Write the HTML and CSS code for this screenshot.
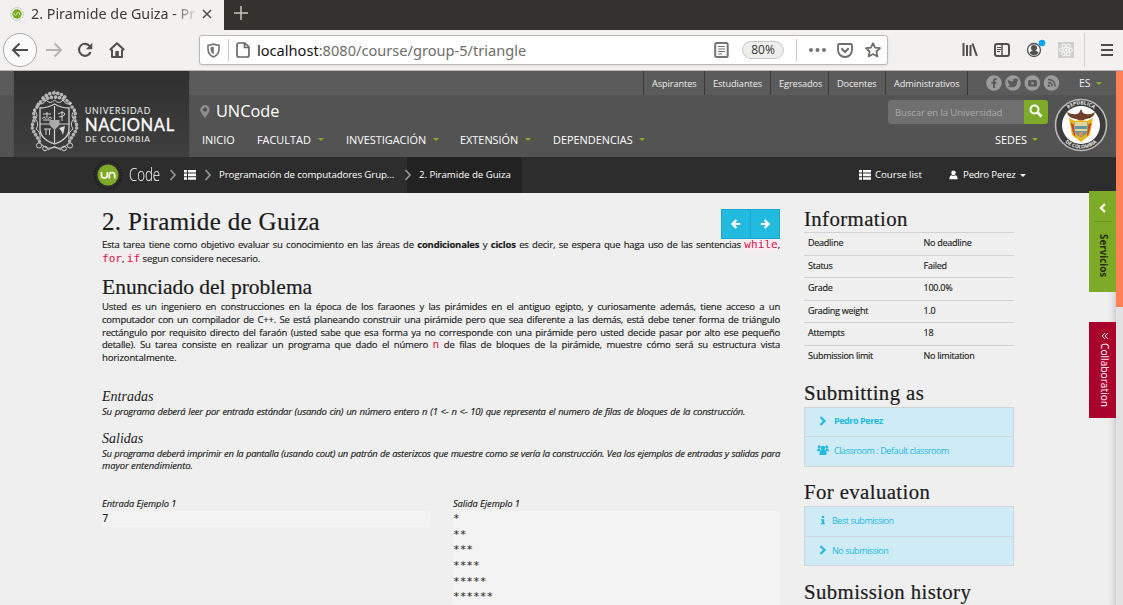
FILE: index.html
```html
<!DOCTYPE html>
<html lang="es">
<head>
<meta charset="utf-8">
<title>2. Piramide de Guiza - Programación</title>
<link rel="stylesheet" href="styles.css">
</head>
<body>
<svg width="0" height="0" class="defs">
  <symbol id="list" viewBox="0 0 12 10"><path d="M0 0h3v2.6H0zM4 0h8v2.6H4zM0 3.6h3v2.6H0zM4 3.6h8v2.6H4zM0 7.2h3v2.6H0zM4 7.2h8v2.6H4z" fill="currentColor"/></symbol>
  <symbol id="chev" viewBox="0 0 8 12"><path d="M1.5 1l4.5 5-4.5 5" fill="none" stroke="currentColor" stroke-width="1.6"/></symbol>
  <symbol id="bold-chev" viewBox="0 0 8 10"><path d="M1.5 1l4 4-4 4" fill="none" stroke="currentColor" stroke-width="2.2"/></symbol>
  <symbol id="arrow" viewBox="0 0 10 10"><path d="M.8 5h7M4.6 1l4 4-4 4" fill="none" stroke="currentColor" stroke-width="2.2"/></symbol>
</svg>

<div class="tabbar">
  <div class="tab">
    <svg class="favicon" viewBox="0 0 14 14"><circle cx="7" cy="7" r="6.3" fill="#f7f7f5" stroke="#a5a5a5" stroke-width=".9" stroke-dasharray="1 .6"/><circle cx="7" cy="7" r="4.7" fill="#78a91f"/><path d="M4.2 5.8v1c0 1.8 2.5 1.8 2.5 0s3-1.8 3 0v1.3" fill="none" stroke="#d8eab0" stroke-width="1"/></svg>
    <span class="tab-title">2. Piramide de Guiza - Pr</span>
    <svg class="tab-close" viewBox="0 0 10 10"><path d="M1 1l8 8M9 1L1 9" stroke="#4b4b49" stroke-width="1.5"/></svg>
  </div>
  <svg class="new-tab" viewBox="0 0 14 14"><path d="M7 0v14M0 7h14" stroke="#c9c5bf" stroke-width="1.5"/></svg>
</div>

<div class="toolbar">
  <div class="back"><svg width="18" height="16" viewBox="0 0 18 16"><path d="M17 8H2M8.5 1.5L2 8l6.500 6.500" fill="none" stroke="#4c4c4b" stroke-width="2"/></svg></div>
  <svg class="fwd" width="18" height="16" viewBox="0 0 18 16"><path d="M1 8h15M9.500 1.500L16 8l-6.500 6.500" fill="none" stroke="#b4b3b1" stroke-width="2"/></svg>
  <svg class="reload" width="16" height="16" viewBox="0 0 16 16"><path d="M13 4.500A6 6 0 1 0 13.600 10" fill="none" stroke="#50504f" stroke-width="2.100"/><path d="M15.300 .8v6.400H8.900z" fill="#50504f"/></svg>
  <svg class="home" width="16" height="16" viewBox="0 0 16 16"><path d="M.8 8L8 1.200 15.200 8M3 7.500V15h10V7.500" fill="none" stroke="#50504f" stroke-width="2" stroke-linejoin="round"/><path d="M6.300 9h3.500v6H6.300z" fill="#50504f"/></svg>
  <div class="urlbar">
    <svg class="shield" width="13" height="15" viewBox="0 0 13 15"><path d="M1 2.200Q4 2 6.500 .9 9 2 12 2.200V6c0 4-2 6.500-5.500 8C3 12.500 1 10 1 6z" fill="none" stroke="#737371" stroke-width="1.600"/><path d="M6.800 3.500v8C4.500 10 3.600 8.500 3.600 6V4.300z" fill="#737371"/></svg>
    <i class="url-sep"></i>
    <svg class="page" width="14" height="16" viewBox="0 0 14 16"><path d="M1 3Q1 1 3 1h6l4 4v8q0 2-2 2H3q-2 0-2-2zM8.500 1v4.500H13" fill="none" stroke="#686866" stroke-width="1.700"/></svg>
    <span class="url"><b>localhost</b>:8080/course/group-5/triangle</span>
    <svg class="reader" width="15" height="16" viewBox="0 0 15 16"><rect x="1.200" y="1" width="12.500" height="14" rx="1.500" fill="none" stroke="#737371" stroke-width="2"/><path d="M4 4.500h7M4 7h7M4 9.500h7M4 12h4" stroke="#737371"/></svg>
    <span class="zoom">80%</span>
    <i class="url-sep tall"></i>
    <svg class="dots" width="17" height="4" viewBox="0 0 17 4"><path d="M0 2a2 2 0 1 1 4 0 2 2 0 1 1-4 0M6.500 2a2 2 0 1 1 4 0 2 2 0 1 1-4 0M13 2a2 2 0 1 1 4 0 2 2 0 1 1-4 0" fill="#737371"/></svg>
    <svg class="pocket" width="16" height="15" viewBox="0 0 16 15"><path d="M2.500 1h11q1.500 0 1.500 1.500V7c0 4-3 7-7 7S1 11 1 7V2.500Q1 1 2.500 1z" fill="none" stroke="#6b6b69" stroke-width="1.800"/><path d="M4.300 5.300L8 9l3.700-3.700" fill="none" stroke="#6b6b69" stroke-width="2"/></svg>
    <svg class="star" width="16" height="16" viewBox="0 0 16 16"><path d="M8 1.200l2.100 4.400 4.900.6-3.600 3.300 1 4.900L8 12l-4.400 2.400 1-4.900L1 6.200l4.900-.6z" fill="none" stroke="#6b6b69" stroke-width="1.700" stroke-linejoin="round"/></svg>
  </div>
  <svg class="library" width="16" height="14" viewBox="0 0 16 14"><path d="M1.500 0v13M5 2v11M8.500 2v11M10.500 .5L14.800 13" stroke="#50504f" stroke-width="2"/></svg>
  <svg class="sidebar-ico" width="16" height="14" viewBox="0 0 16 14"><rect x="1" y="1" width="14" height="12" rx="2" fill="none" stroke="#50504f" stroke-width="2"/><path d="M8 1v12" stroke="#50504f" stroke-width="1.500"/><path d="M3 4.500h4M3 6.500h4M3 8.500h3" stroke="#50504f"/></svg>
  <svg class="account" width="20" height="20" viewBox="0 0 20 20"><circle cx="8" cy="12" r="6.500" fill="none" stroke="#50504f" stroke-width="1.300"/><circle cx="8" cy="10" r="3" fill="#50504f"/><path d="M3.500 15q1-2.500 4.500-2.500t4.500 2.500Q8 19.500 3.500 15z" fill="#50504f"/><circle cx="16" cy="5" r="3.300" fill="#00a8f3"/></svg>
  <svg class="react" width="16" height="16" viewBox="0 0 16 16"><path d="M0 0h16v16H0z" fill="#cfcfcd"/><g fill="none" stroke="#f4f4f4" stroke-width="1.100"><ellipse cx="8" cy="8" rx="6.500" ry="2.500"/><ellipse cx="8" cy="8" rx="6.500" ry="2.500" transform="rotate(60 8 8)"/><ellipse cx="8" cy="8" rx="6.500" ry="2.500" transform="rotate(120 8 8)"/></g><circle cx="8" cy="8" r="1.300" fill="#fff"/></svg>
  <i class="tool-sep"></i>
  <svg class="menu-ico" width="12" height="12" viewBox="0 0 12 12"><path d="M0 1h12M0 6h12M0 11h12" stroke="#4c4c4b" stroke-width="1.900"/></svg>
</div>

<header class="header">
  <div class="brand">
    <svg class="shield-logo" width="49" height="64" viewBox="0 0 49 64">
      <g fill="none" stroke="#d0d0d0">
        <path d="M10 19q8 0 14.500-4Q31 19 39 19v21q0 10-14.500 15Q10 50 10 40z" stroke-width="1.300"/>
        <path d="M24.500 17v37M10 35h29" stroke-width="1.200"/>
        <path d="M7 18q-4 4-3 8t-1 8 1 9 6 10M42 18q4 4 3 8t1 8-1 9-6 10" stroke="#b5b5b5" stroke-width="3.500" stroke-linecap="round" stroke-dasharray=".1 3.600"/>
        <path d="M4 21q5 5 1.500 9 4 5 .5 10 5 3 4 10M45 21q-5 5-1.500 9-4 5-.5 10-5 3-4 10"/>
        <path d="M8 16q4-7 16.500-8Q37 9 41 16M13 9q5-5 11.500-5T36 9" stroke="#b5b5b5" stroke-width="3.600" stroke-linecap="round" stroke-dasharray=".1 3.900"/>
        <path d="M7 14q6 3 9-3 4 5 8.500 0 4.500 5 8.500 0 3 6 9 3"/>
        <circle cx="9" cy="56.500" r="2.600"/><circle cx="15" cy="59.500" r="2.300"/><circle cx="34" cy="59.500" r="2.300"/><circle cx="40" cy="56.500" r="2.600"/>
        <path d="M11 55q7 7 13.500 2.500Q31 62 38 55M18 61q6-5 13 0"/>
        <path d="M13 25h8M17 23v6M12 30q2-4 4 0M18 30q2-4 4 0M13 31h8M28 25q5-3 7 0-1 3-6 3M32 22v10M14 40h7M16 40v6M19.500 40v6"/>
      </g>
      <path d="M24.500 1l2 4h-4zM19.500 31h10v5l-5 5-5-5z" fill="#aaa"/><path d="M29 39l6-2-2 9q-1-4-4-7z" fill="#ddd"/>
    </svg>
    <div class="brand-text"><span class="b1">UNIVERSIDAD</span><span class="b2">NACIONAL</span><span class="b3">DE COLOMBIA</span></div>
  </div>
  <div class="header-main">
    <div class="topbar">
      <span class="tl l1">Aspirantes</span><span class="tl l2">Estudiantes</span><span class="tl l3">Egresados</span><span class="tl l4">Docentes</span><span class="tl l5">Administrativos</span>
      <svg class="social" width="74" height="16" viewBox="0 0 74 16"><g fill="#9b9b9b"><circle cx="8" cy="8" r="7.800"/><circle cx="27" cy="8" r="7.800"/><circle cx="46.300" cy="8" r="7.800"/><circle cx="65.500" cy="8" r="7.800"/></g><path d="M7 13V8.700H5.300V6.800H7V5.300Q7 3.200 9 3.200h1.600v1.900H9.500q-.5 0-.5.600v1.100h1.600l-.3 1.900H9V13z" fill="#5b5b5b"/><path d="M22 4.500q2 2 5 2-.3-3 2.300-3 1 0 1.600.6l1.400-.4-.7 1.300.9-.1-1.100 1.300q0 6-6 6-2.300 0-4-1.200 2 .1 3-.8-1.700-.3-2.100-1.600h1q-1.600-.7-1.600-2.200l1 .2q-1.400-1.200-.7-2.100z" fill="#5b5b5b"/><rect x="42" y="5" width="9" height="6.500" rx="1.500" fill="#5b5b5b"/><path d="M45.500 6.500v3.500l2.800-1.700z" fill="#9b9b9b"/><path d="M62 7.500q4 0 4 4M62 4.500q7 0 7 7" fill="none" stroke="#5b5b5b" stroke-width="1.600"/><circle cx="62.800" cy="10.700" r="1.200" fill="#5b5b5b"/></svg>
      <span class="lang">ES</span><i class="caret lang-caret"></i>
    </div>
    <div class="header-body">
      <div class="site">
        <div class="site-row">
          <svg class="pin" width="10" height="14" viewBox="0 0 10 14"><path d="M5 0a4.700 4.700 0 0 1 4.700 4.700C9.700 7.500 6.500 10 5 13.500 3.500 10 .3 7.500 .3 4.700A4.700 4.700 0 0 1 5 0zm0 2.600a2.100 2.100 0 1 0 0 4.200 2.100 2.100 0 0 0 0-4.200z" fill="#8c8c8c"/></svg>
          <span class="site-name">UNCode</span>
          <div class="search"><span>Buscar en la Universidad</span></div>
          <div class="search-btn"><svg width="14" height="14" viewBox="0 0 14 14"><circle cx="5.500" cy="5.500" r="4" fill="none" stroke="#fff" stroke-width="2"/><path d="M8.500 8.500l4 4" stroke="#fff" stroke-width="2.600"/></svg></div>
        </div>
        <nav class="menu"><span class="m1">INICIO</span><span class="m2">FACULTAD</span><i class="caret"></i><span class="m3">INVESTIGACIÓN</span><i class="caret"></i><span class="m4">EXTENSIÓN</span><i class="caret"></i><span class="m5">DEPENDENCIAS</span><i class="caret"></i><span class="m6">SEDES</span><i class="caret"></i></nav>
      </div>
      <svg class="crest" width="54" height="54" viewBox="0 0 54 54">
        <circle cx="27" cy="27" r="25.500" fill="#3c3c3c" stroke="#b9b9b9" stroke-width="1.600"/><circle cx="27" cy="27" r="19" fill="#fff"/>
        <path id="crest-top" d="M6.500 27a20.500 20.500 0 0 1 41 0" fill="none"/><path id="crest-bottom" d="M3.500 27a23.500 23.500 0 0 0 47 0" fill="none"/>
        <text class="crest-text"><textPath href="#crest-top" startOffset="50%" text-anchor="middle">REPÚBLICA</textPath></text><text class="crest-text"><textPath href="#crest-bottom" startOffset="50%" text-anchor="middle">DE COLOMBIA</textPath></text>
        <path d="M13 14q7 4 12 1l2-4 2 4q6 3 12-1-1 6-9 7l-5 2-5-2q-8-1-9-7z" fill="#70402c"/>
        <path d="M15 20l3 17 9 7 9-7 3-17-6 3-6-1-6 1z" fill="#e8b421"/><path d="M16.500 25l3 11 2 3-2-13zM37.500 25l-3 11-2 3 2-13z" fill="#c4472d"/>
        <path d="M20.500 24h13v9q-2 5-6.500 6-4.500-1-6.500-6z" fill="#6b93a8"/><path d="M21 24h12v4H21zM21 31h12v2H21z" fill="#ddd79a"/><path d="M25 34h4v4h-4z" fill="#d9933c"/>
      </svg>
    </div>
  </div>
</header>

<nav class="crumbs">
  <svg class="un" width="34" height="34" viewBox="0 0 34 34"><circle cx="17" cy="17" r="13.500" fill="none" stroke="#1f1f1f" stroke-width="2" stroke-dasharray="1.500 1.300"/><circle cx="17" cy="17" r="10.500" fill="#7eab27"/><path d="M10.500 14v3.500q0 2.500 2.900 2.500t2.900-2.500V14M18.300 20.500v-3.700q0-2.300 2.700-2.300t2.700 2.300v3.700" fill="none" stroke="#fff" stroke-width="1.600"/></svg>
  <span class="code-name"><span>Code</span></span>
  <svg class="cv c1"><use href="#chev"/></svg>
  <svg class="li"><use href="#list"/></svg>
  <svg class="cv c2"><use href="#chev"/></svg>
  <span class="crumb-a">Programación de computadores Grup...</span>
  <div class="crumb-active"><svg class="cv"><use href="#chev"/></svg><span>2. Piramide de Guiza</span></div>
  <svg class="li li2"><use href="#list"/></svg>
  <span class="course-list">Course list</span>
  <svg class="user" width="9" height="10" viewBox="0 0 10 10"><ellipse cx="5" cy="2.600" rx="2.500" ry="2.600" fill="#fff"/><path d="M.5 9.800Q.5 5.200 3 5.200q2 1.200 4 0 2.500 0 2.500 4.600z" fill="#fff"/></svg>
  <span class="user-name">Pedro Perez</span><i class="caret white"></i>
</nav>

<main class="content">
  <article class="article">
    <div class="title-row"><h1>2. Piramide de Guiza</h1>
      <div class="pager"><span><svg class="flip" width="10" height="10"><use href="#arrow"/></svg></span><span><svg width="10" height="10"><use href="#arrow"/></svg></span></div></div>
    <div class="intro">
      <div class="ln just">Esta tarea tiene como objetivo evaluar su conocimiento en las áreas de <b>condicionales</b> y <b>ciclos</b> es decir, se espera que haga uso de las sentencias <code>while</code>,</div>
      <div class="ln"><code>for</code>, <code>if</code> <span class="i2">segun considere necesario.</span></div>
    </div>
    <h2>Enunciado del problema</h2>
    <div class="body-text">
      <div class="ln just">Usted es un ingeniero en construcciones en la época de los faraones y las pirámides en el antiguo egipto, y curiosamente además, tiene acceso a un</div>
      <div class="ln just">computador con un compilador de C++. Se está planeando construir una pirámide pero que sea diferente a las demás, está debe tener forma de triángulo</div>
      <div class="ln just">rectángulo por requisito directo del faraón (usted sabe que esa forma ya no corresponde con una pirámide pero usted decide pasar por alto ese pequeño</div>
      <div class="ln just">detalle). Su tarea consiste en realizar un programa que dado el número <code>n</code> de filas de bloques de la pirámide, muestre cómo será su estructura vista</div>
      <div class="ln">horizontalmente.</div>
    </div>
    <h3 class="h-in">Entradas</h3>
    <div class="ital"><div class="ln just w643">Su programa deberá leer por entrada estándar (usando cin) un número entero n (1 &lt;- n &lt;- 10) que representa el numero de filas de bloques de la construcción.</div></div>
    <h3 class="h-out">Salidas</h3>
    <div class="ital"><div class="ln just">Su programa deberá imprimir en la pantalla (usando cout) un patrón de asterizcos que muestre como se vería la construcción. Vea los ejemplos de entradas y salidas para</div><div class="ln">mayor entendimiento.</div></div>
    <div class="samples">
      <div><div class="ital cap">Entrada Ejemplo 1</div><pre>7</pre></div>
      <div><div class="ital cap">Salida Ejemplo 1</div><pre class="out">*
**
***
****
*****
******</pre></div>
    </div>
  </article>

  <aside class="side">
    <h2 class="s1">Information</h2>
    <dl class="info">
      <dt>Deadline</dt><dd>No deadline</dd>
      <dt>Status</dt><dd>Failed</dd>
      <dt>Grade</dt><dd>100.0%</dd>
      <dt>Grading weight</dt><dd>1.0</dd>
      <dt>Attempts</dt><dd>18</dd>
      <dt>Submission limit</dt><dd>No limitation</dd>
    </dl>
    <h2 class="s2">Submitting as</h2>
    <div class="group">
      <div class="item"><svg class="ic" viewBox="0 0 8 10"><use href="#bold-chev"/></svg><b>Pedro Perez</b></div>
      <div class="item"><svg class="ic" viewBox="0 0 12 10"><g fill="currentColor"><circle cx="6" cy="3" r="2.200"/><circle cx="2.200" cy="1.800" r="1.500"/><circle cx="9.800" cy="1.800" r="1.500"/><path d="M2.500 10V7.500Q2.500 5 4.500 5h3q2 0 2 2.500V10zM0 6.300Q0 3.500 1.500 3.500H3L3.500 5 2.300 6.300zM12 6.300q0-2.800-1.500-2.800H9L8.500 5l1.200 1.300z"/></g></svg><span>Classroom : Default classroom</span></div>
    </div>
    <h2 class="s3">For evaluation</h2>
    <div class="group ev">
      <div class="item"><svg class="ic" viewBox="0 0 8 10"><path d="M2.800 1h2.400v2H2.800zM2 4.200h3.200V8H6v1.300H2V8h.9V5.500H2z" fill="currentColor"/></svg><span>Best submission</span></div>
      <div class="item"><svg class="ic" viewBox="0 0 8 10"><use href="#bold-chev"/></svg><span>No submission</span></div>
    </div>
    <h2 class="s4">Submission history</h2>
  </aside>
</main>

<div class="scrollbar"><i></i></div>
<div class="services"><svg width="8" height="10" viewBox="0 0 8 10"><path d="M6 1L2 5l4 4" fill="none" stroke="#fff" stroke-width="2.200"/></svg><span>Servicios</span></div>
<div class="collab"><svg width="8" height="8" viewBox="0 0 8 8"><path d="M4 1L1 4l3 3M7 1L4 4l3 3" fill="none" stroke="#fff" stroke-width="1"/></svg><span>Collaboration</span></div>
</body>
</html>
```

FILE: styles.css
```css
* { box-sizing: border-box; }
body { margin: 0; width: 1123px; height: 605px; overflow: hidden; position: relative; background: #efefef; color: #1a1a1a; font-family: "Open Sans", sans-serif; }
svg { display: block; flex: none; }
.defs { position: absolute; }
span { white-space: nowrap; }

/* browser chrome */
.tabbar { display: flex; height: 30px; background: #33322e; align-items: center; }
.tab { width: 224px; height: 30px; background: #f2f1f0; display: flex; align-items: center; padding: 0 0 2px 10px; flex: none; }
.favicon { width: 14px; height: 14px; margin-right: 7px; }
.tab-title { width: 165px; overflow: hidden; font-family: "Noto Sans", sans-serif; font-size: 14.3px; line-height: 20px; color: #3c3b37; -webkit-mask-image: linear-gradient(90deg, #000 142px, rgba(0,0,0,.1) 165px); mask-image: linear-gradient(90deg, #000 142px, rgba(0,0,0,.1) 165px); }
.tab-close { width: 10px; height: 10px; margin-left: 6px; }
.new-tab { width: 14px; height: 14px; margin: 0 0 4px 10px; }
.toolbar { height: 41px; background: #f2f1f0; border-bottom: 1px solid #b9b8b4; display: flex; align-items: center; }
.back { width: 34px; height: 34px; border: 1px solid #aaa9a6; border-radius: 50%; background: #fafafa; margin-left: 3px; display: flex; align-items: center; justify-content: center; flex: none; }
.fwd { margin-left: 8px; }
.reload { margin-left: 14px; }
.home { margin-left: 16px; }
.urlbar { width: 689px; height: 30px; margin-left: 74px; border: 1px solid #bab9b6; border-radius: 3px; background: #fff; display: flex; align-items: center; flex: none; box-shadow: 0 1px 2px #ddd; }
.shield { margin-left: 7px; }
.url-sep { width: 1px; height: 22px; background: #c9c8c5; margin-left: 8px; }
.page { margin-left: 7px; }
.url { width: 457px; margin-left: 7px; font: 14.6px/20px "Noto Sans", sans-serif; color: #6d6d6b; }
.url b { font-weight: 400; color: #151515; }
.zoom { width: 42px; height: 18px; margin-left: 13px; border: 1px solid #c9c9c9; border-radius: 9px; background: #eee; font-size: 12px; line-height: 16px; text-align: center; color: #333; }
.url-sep.tall { margin-left: 12px; }
.dots { margin-left: 12px; }
.pocket { margin-left: 11px; }
.star { margin-left: 12px; }
.library { margin-left: 74px; }
.sidebar-ico { margin-left: 16px; }
.account { margin: -4px 0 0 16px; }
.react { margin-left: 12px; }
.tool-sep { width: 1px; height: 34px; background: #cfcecb; margin-left: 10px; }
.menu-ico { margin-left: 16px; }

/* university header */
.header { display: flex; width: 1116px; height: 86px; background: linear-gradient(#5b5b5b 24px, #535353 24px); }
.brand { width: 175px; height: 86px; margin-left: 14px; background: linear-gradient(#303030, #3f3f3f); display: flex; flex: none; box-shadow: 0 0 2px #444; clip-path: inset(0 -2px 0 -2px); }
.shield-logo { margin: 18px 0 0 16px; }
.brand-text { display: flex; flex-direction: column; margin: 35px 0 0 6px; color: #eee; font-family: Lato, sans-serif; }
.b1 { font-size: 8.600px; line-height: 11px; letter-spacing: .8px; }
.b2 { font-size: 16.500px; line-height: 17px; letter-spacing: .65px; font-weight: 400; color: #fff; -webkit-text-stroke: .3px #fff; }
.b3 { font-size: 8.400px; line-height: 11px; letter-spacing: .75px; }
.header-main { flex: 1; }
.topbar { display: flex; height: 24px; align-items: center; padding-left: 454px; font-size: 9.200px; letter-spacing: -.08px; color: #eee; }
.tl { height: 24px; line-height: 25px; border-left: 1px solid #383838; padding-left: 8px; flex: none; }
.l1 { width: 61px; } .l2 { width: 66px; } .l3 { width: 58px; } .l4 { width: 57px; }
.l5 { width: 83px; border-right: 1px solid #383838; }
.social { margin-left: 18px; }
.lang { width: 17px; margin-left: 19px; font-size: 10.500px; }
.caret { width: 0; height: 0; border: 3px solid transparent; border-top-color: #83ad28; border-bottom: 0; flex: none; }
.caret.white { border-top-color: #fff; margin-left: 4px; }
.header-body { display: flex; height: 62px; }
.site { width: 865px; }
.site-row { display: flex; height: 34px; align-items: center; }
.pin { margin-left: 11px; }
.site-name { width: 672px; margin-left: 6px; font-size: 16.300px; line-height: 22px; margin-top: -3px; color: #fff; }
.search { width: 136px; height: 24px; background: #6f6f6f; border-radius: 3px 0 0 3px; font-size: 9.600px; letter-spacing: -.13px; line-height: 25px; padding-left: 7px; color: #aaa; }
.search-btn { width: 24px; height: 24px; background: #7eab27; border-radius: 0 3px 3px 0; display: flex; align-items: center; justify-content: center; padding-bottom: 2px; }
.menu { display: flex; align-items: center; height: 22px; margin-top: -1px; font-size: 10.900px; color: #fff; padding-left: 13px; }
.m1 { width: 55px; } .m2 { width: 61px; } .m3 { width: 87px; margin-left: 22px; } .m4 { width: 65px; margin-left: 21px; } .m5 { width: 86px; margin-left: 22px; } .m6 { width: 37px; margin-left: 350px; }
.crest { margin-top: 3px; }
.crest-text { font: bold 5px "Open Sans", sans-serif; fill: #eee; }

/* breadcrumbs */
.crumbs { display: flex; align-items: center; width: 1116px; height: 36px; background: #2d2d2d; color: #fff; font-size: 9.700px; letter-spacing: -.1px; }
.crumbs > span, .crumb-active span { position: relative; top: -1px; }
.un { margin-left: 91px; }
.code-name { width: 44px; margin-left: 4px; font: 300 19px/34px "Open Sans", sans-serif; }
.code-name span { display: inline-block; transform: scaleX(.7); transform-origin: 0 50%; }
.cv { width: 8px; height: 12px; color: #999; }
.c1 { margin-left: -4px; }
.li { width: 12px; height: 10px; margin-left: 7px; }
.c2 { margin-left: 8px; }
.crumb-a { width: 188px; margin-left: 7px; }
.crumb-active { width: 115px; height: 36px; background: #222; display: flex; align-items: center; margin-right: 337px; }
.crumb-active span { margin-left: 7px; letter-spacing: -.05px; }
.crumb-active .cv { margin-left: -3px; }
.li2 { margin-left: 0; }
.course-list { width: 74px; margin-left: 4px; letter-spacing: -.05px; }
.user-name { width: 53px; margin-left: 5px; letter-spacing: -.2px; }

/* page */
.content { display: flex; width: 1116px; height: 412px; padding-left: 102px; box-shadow: inset -8px 0 7px -7px #bbb; overflow: hidden; }
.article { width: 678px; }
h1, h2, h3 { margin: 0; font-family: "Liberation Serif", serif; font-weight: 400; white-space: nowrap; color: #1c1c1c; }
.title-row { display: flex; justify-content: space-between; height: 45px; padding-top: 16px; }
h1 { font-size: 25px; line-height: 26px; letter-spacing: .35px; -webkit-text-stroke: .2px #1c1c1c; }
.pager { display: flex; width: 59px; height: 30px; position: relative; }
.pager span { flex: 1; background: #22bade; border: 1px solid #13a9cf; display: flex; align-items: center; justify-content: center; color: #fff; }
.pager span + span { border-left: 0; }
.flip { transform: scaleX(-1); }
.ln { height: 12.750px; line-height: 12.750px; white-space: nowrap; font-size: 9.500px; letter-spacing: -.1px; -webkit-text-stroke: .15px currentColor; }
.just { text-align: justify; text-align-last: justify; white-space: normal; letter-spacing: -.22px; }
.w643 { width: 643px; }
.intro .ln { height: 14px; line-height: 14px; }
.ital .just { letter-spacing: -.3px; }
code { font: 11.100px/12px "DejaVu Sans Mono", monospace; letter-spacing: 0; color: #d8134c; background: #f7edf0; -webkit-text-stroke: 0; }
.article h2 { font-size: 21.5px; line-height: 26px; margin: 8px 0 1px; letter-spacing: 0; -webkit-text-stroke: .2px #1c1c1c; }
.h-in { margin-top: 23px; }
.h-out { margin-top: 11px; }
h3 { font-size: 14px; line-height: 18px; font-style: italic; }
.ital { font-style: italic; }
.samples { display: grid; grid-template-columns: 328px 327px; column-gap: 23px; margin-top: 24px; }
.cap { font-size: 9.300px; line-height: 13px; letter-spacing: -.08px; -webkit-text-stroke: .15px currentColor; }
pre { margin: 1px 0 0; font: 11.100px/15.650px "DejaVu Sans Mono", monospace; background: #f3f3f3; color: #222; }
.out { padding-bottom: 16px; }

.side { width: 210px; margin-left: 24px; font-size: 9px; letter-spacing: -.25px; }
.side h2 { font-size: 20.8px; line-height: 26px; letter-spacing: .4px; -webkit-text-stroke: .2px #1c1c1c; }
.s1 { margin-top: 13px; }
.info { display: grid; grid-template-columns: 115.500px 94.500px; margin: 0; grid-auto-rows: 22.500px; line-height: 20.500px; -webkit-text-stroke: .15px currentColor; }
.info dt, .info dd { margin: 0; border-top: 1px solid #d2d2d2; padding-left: 4px; }
.side .s2 { margin: 13px 0 1px; }
.group { border: 1px solid #cfd6d9; background: #cfebf6; color: #22bade; height: 60px; letter-spacing: -.43px; }
.item { display: flex; align-items: center; height: 28px; padding-bottom: 3px; }
.item + .item { height: 30px; border-top: 1px solid #cfd6d9; padding-bottom: 3px; }
.ic { width: 12px; height: 10px; margin: 0 5px 0 12px; }
.ev .ic { margin-right: 3px; }
.ev .item { letter-spacing: -.45px; }
.ev .item:first-child { height: 29px; padding-bottom: 3px; }
.side .s3 { margin: 12px 0 1px; }
.s4 { margin-top: 13px; }

/* overlays pinned to the right edge */
.scrollbar { position: absolute; right: 0; top: 71px; width: 7px; height: 534px; background: #e2e2e2; }
.scrollbar i { display: block; height: 236px; background: #ff7f57; }
.services { position: absolute; left: 1089px; top: 191px; width: 27px; height: 101px; background: #7eab27; display: flex; flex-direction: column; align-items: center; padding-top: 12px; }
.services span { writing-mode: vertical-rl; font-size: 9.800px; font-weight: 700; line-height: 18px; margin-top: 8px; padding-top: 13px; letter-spacing: 0; color: #252d12; background: linear-gradient(#6d9620, #6d9620) top / 100% 1px no-repeat; }
.collab { position: absolute; left: 1089px; top: 322px; width: 27px; height: 96px; background: #a9002c; display: flex; flex-direction: column; align-items: center; padding: 10px 0 0 4px; color: #fff; }
.collab span { writing-mode: vertical-rl; font-size: 10.200px; line-height: 14px; margin-top: 3px; }
```
